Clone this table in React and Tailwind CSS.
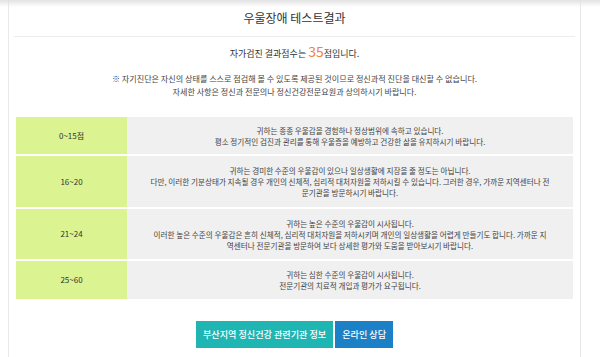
import React from 'react'

const FONT = { fontFamily: '"Noto Sans CJK KR", "Noto Sans", sans-serif' }

const ROWS = [
  {
    range: '0~15점',
    h: 'h-[37px]',
    lines: [
      '귀하는 종종 우울감을 경험하나 정상범위에 속하고 있습니다.',
      '평소 정기적인 검진과 관리를 통해 우울증을 예방하고 건강한 삶을 유지하시기 바랍니다.',
    ],
  },
  {
    range: '16~20',
    h: 'h-[51px]',
    lines: [
      '귀하는 경미한 수준의 우울감이 있으나 일상생활에 지장을 줄 정도는 아닙니다.',
      '다만, 이러한 기분상태가 지속될 경우 개인의 신체적, 심리적 대처자원을 저하시킬 수 있습니다. 그러한 경우, 가까운 지역센터나 전',
      '문기관을 방문하시기 바랍니다.',
    ],
  },
  {
    range: '21~24',
    h: 'h-[50px]',
    lines: [
      '귀하는 높은 수준의 우울감이 시사됩니다.',
      '이러한 높은 수준의 우울감은 흔히 신체적, 심리적 대처자원을 저하시키며 개인의 일상생활을 어렵게 만들기도 합니다. 가까운 지',
      '역센터나 전문기관을 방문하여 보다 상세한 평가와 도움을 받아보시기 바랍니다.',
    ],
  },
  {
    range: '25~60',
    h: 'h-[38px]',
    lines: [
      '귀하는 심한 수준의 우울감이 시사됩니다.',
      '전문기관의 치료적 개입과 평가가 요구됩니다.',
    ],
  },
]

export default function App() {
  return (
    <div className="relative w-[600px] h-[357px] bg-white overflow-hidden" style={FONT}>
      {/* top shadow */}
      <div className="absolute top-0 left-0 right-0 h-[7px] bg-gradient-to-b from-[#e2e2e2] to-transparent" />

      <div className="ml-[8px] w-[573px] h-full border-x border-[#e8e8e8] flex flex-col">
        <div className="mx-[5px] h-[37px] flex items-center justify-center border-b border-[#ececec] text-[12px] text-[#333]">
          우울장애 테스트결과
        </div>

        <p className="mt-[7px] h-[18px] flex items-baseline justify-center text-[9px] text-[#333]">
          자가검진 결과점수는 <span className="text-[14px] text-[#f0823c] ml-[2px] leading-none">35</span>점입니다.
        </p>

        <div className="mt-[10px] text-center text-[8.1px] leading-[13px] text-[#444]">
          <p>{'※\uFE0E'} 자기진단은 자신의 상태를 스스로 점검해 볼 수 있도록 제공된 것이므로 정신과적 진단을 대신할 수 없습니다.</p>
          <p>자세한 사항은 정신과 전문의나 정신건강전문요원과 상의하시기 바랍니다.</p>
        </div>

        <div className="mt-[19px] mx-[7px] flex flex-col gap-[2px]">
          {ROWS.map((row) => (
            <div key={row.range} className={`flex ${row.h}`}>
              <div className="w-[111px] shrink-0 bg-[#dbf391] flex items-center justify-center text-[8px] text-[#333]">
                {row.range}
              </div>
              <div className="flex-1 bg-[#f0f0f0] flex flex-col items-center justify-center text-[7.6px] leading-[11px] text-[#444]">
                {row.lines.map((l) => (
                  <p key={l} className="whitespace-nowrap">{l}</p>
                ))}
              </div>
            </div>
          ))}
        </div>

        <div className="mt-[22px] flex justify-center gap-[2px]">
          <button className="h-[27px] px-[7px] bg-[#1fb5b3] text-white text-[9.1px] font-medium">
            부산지역 정신건강 관련기관 정보
          </button>
          <button className="h-[27px] px-[7px] bg-[#1b80c6] text-white text-[9.1px] font-medium">
            온라인 상담
          </button>
        </div>
      </div>
    </div>
  )
}
